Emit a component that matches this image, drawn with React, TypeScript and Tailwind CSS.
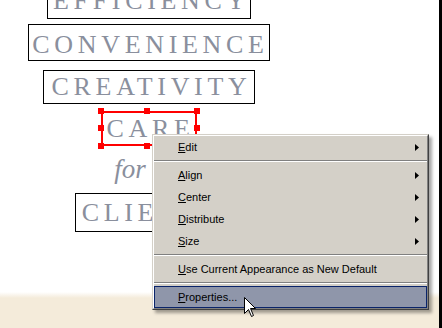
import React from "react";

const serif = { fontFamily: '"Liberation Serif", "Times New Roman", serif' };
const ui = { fontFamily: '"Liberation Sans", Arial, sans-serif' };

function Word({ text, h, className = "" }: { text: string; h: string; className?: string }) {
  return (
    <div
      className={`flex items-center border border-black bg-white text-[26px] leading-none tracking-[0.18em] text-[#8a8f9d] ${h} ${className}`}
      style={serif}
    >
      {text}
    </div>
  );
}

function Handle({ pos }: { pos: string }) {
  return <span className={`absolute h-[6px] w-[6px] bg-[#ff0000] ${pos}`} />;
}

function Arrow() {
  return (
    <svg width="4" height="7" viewBox="0 0 4 7" className="mr-[7px]">
      <polygon points="0,0 4,3.5 0,7" fill="#000" />
    </svg>
  );
}

function Item({ label, sub, active }: { label: string; sub?: boolean; active?: boolean }) {
  return (
    <div
      className={`flex h-[22px] items-center justify-between pl-[23px] ${
        active ? "border border-[#0a246a] bg-[#8f96aa]" : "border border-transparent"
      }`}
    >
      <span className="text-[11px] leading-none text-black first-letter:underline">{label}</span>
      {sub && <Arrow />}
    </div>
  );
}

function Sep() {
  return (
    <div className="flex h-[6px] flex-col justify-center">
      <div className="border-t border-b border-t-[#808080] border-b-white" />
    </div>
  );
}

export default function App() {
  return (
    <div className="relative flex h-[328px] w-[442px] overflow-hidden bg-white">
      <div className="flex flex-1 flex-col">
        <div className="h-[292px] overflow-hidden">
          <div className="flex w-[298px] flex-col items-center -mt-[18px]">
            <Word text="EFFICIENCY" h="h-[37px]" className="pl-[5px] pr-0" />
            <Word text="CONVENIENCE" h="h-[37px]" className="mt-[5px] pt-[4px] pl-[3px] pr-0" />
            <Word text="CREATIVITY" h="h-[34px]" className="mt-[9px] pl-[8px] pr-[3px]" />
            <div className="relative mt-[7px]">
              <div
                className="flex h-[35px] items-center border-2 border-[#ff0000] pl-[3px] pr-0 text-[26px] leading-none tracking-[0.18em] text-[#8a8f9d]"
                style={serif}
              >
                CARE
              </div>
              <Handle pos="-left-[3px] -top-[3px]" />
              <Handle pos="left-[43px] -top-[3px]" />
              <Handle pos="-right-[3px] -top-[3px]" />
              <Handle pos="-left-[3px] top-[14px]" />
              <Handle pos="-right-[3px] top-[14px]" />
              <Handle pos="-left-[3px] -bottom-[3px]" />
              <Handle pos="left-[43px] -bottom-[3px]" />
              <Handle pos="-right-[3px] -bottom-[3px]" />
            </div>
            <div
              className="mr-[38px] flex h-[47px] items-center text-[27px] italic leading-none text-[#8a8f9d]"
              style={serif}
            >
              for
            </div>
            <Word text="CLIENTS" h="h-[39px]" className="pl-[6px] pr-[1px]" />
          </div>
        </div>
        <div className="h-[6px] bg-gradient-to-b from-white to-[#f4ebda]" />
        <div className="flex-1 bg-[#f4ebda]" />
      </div>
      <div className="w-[3px] bg-black" />

      <div
        className="absolute left-[152px] top-[134px] w-[277px] border border-t-[#d4d0c8] border-l-[#d4d0c8] border-r-[#404040] border-b-[#404040] bg-[#d4d0c8] shadow-[3px_3px_3px_rgba(0,0,0,0.35)]"
        style={ui}
      >
        <div className="border border-t-white border-l-white border-r-[#808080] border-b-[#808080]">
          <Item label="Edit" sub />
          <Sep />
          <Item label="Align" sub />
          <Item label="Center" sub />
          <Item label="Distribute" sub />
          <Item label="Size" sub />
          <Sep />
          <Item label="Use Current Appearance as New Default" />
          <Sep />
          <Item label="Properties..." active />
        </div>
      </div>

      <svg className="absolute left-[244px] top-[297px]" width="13" height="21" viewBox="0 0 13 21">
        <polygon
          points="0.5,0.5 0.5,16.5 4.5,12.5 7.5,19.5 9.5,18.5 6.5,11.5 11.5,11.5"
          fill="#fff"
          stroke="#000"
          strokeWidth="1"
          strokeLinejoin="miter"
        />
      </svg>
    </div>
  );
}
